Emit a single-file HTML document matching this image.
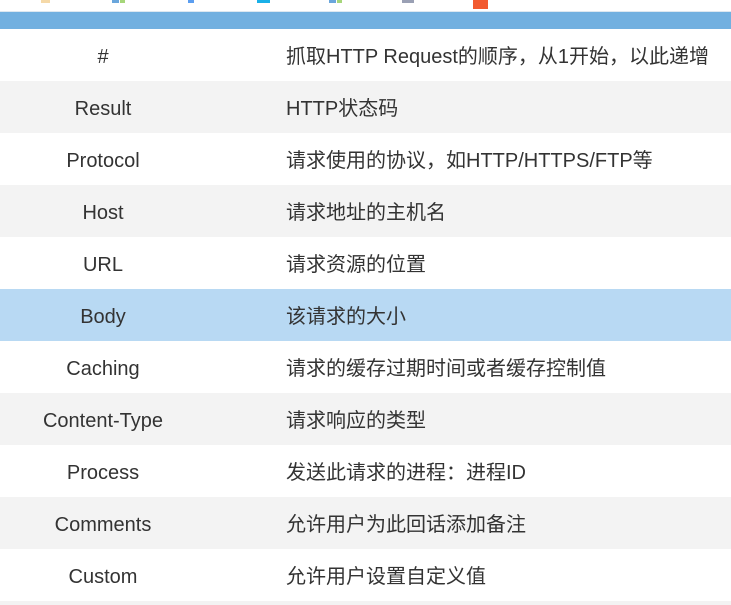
<!DOCTYPE html>
<html><head><meta charset="utf-8"><style>
html,body{margin:0;width:731px;height:605px;overflow:hidden}
body{background:#fff;font-family:"Liberation Sans","Noto Sans CJK SC",sans-serif;color:#333;position:relative}
.i{position:absolute;top:0;height:3px}
.hd{position:absolute;top:11px;left:0;width:731px;height:18px;background:#72b0e0;border-top:1px solid #dde8f0;box-sizing:border-box}
.r{position:absolute;left:0;width:731px;height:52px;font-size:20px;line-height:56px;overflow:hidden}
.r .a{position:absolute;left:0;width:206px;text-align:center}
.r .b{position:absolute;left:286px;white-space:nowrap}
.g{background:#f3f3f3}.s{background:#b8d9f3}
</style></head><body>
<div class="i" style="left:41px;width:9px;background:#f5d9a8"></div>
<div class="i" style="left:112px;width:7px;background:#6aa6dc"></div>
<div class="i" style="left:120px;width:5px;background:#a6d67a"></div>
<div class="i" style="left:188px;width:6px;background:#5b9ef0"></div>
<div class="i" style="left:257px;width:13px;background:#19b0e8"></div>
<div class="i" style="left:329px;width:7px;background:#6aa6dc"></div>
<div class="i" style="left:337px;width:5px;background:#a6d67a"></div>
<div class="i" style="left:402px;width:12px;background:#9aa0b4"></div>
<div class="i" style="left:473px;width:15px;height:9px;background:#f25a30"></div>
<div class="hd"></div>
<div class="r" style="top:29px"><span class="a">#</span><span class="b">抓取HTTP Request的顺序，从1开始，以此递增</span></div>
<div class="r g" style="top:81px"><span class="a">Result</span><span class="b">HTTP状态码</span></div>
<div class="r" style="top:133px"><span class="a">Protocol</span><span class="b">请求使用的协议，如HTTP/HTTPS/FTP等</span></div>
<div class="r g" style="top:185px"><span class="a">Host</span><span class="b">请求地址的主机名</span></div>
<div class="r" style="top:237px"><span class="a">URL</span><span class="b">请求资源的位置</span></div>
<div class="r s" style="top:289px"><span class="a">Body</span><span class="b">该请求的大小</span></div>
<div class="r" style="top:341px"><span class="a">Caching</span><span class="b">请求的缓存过期时间或者缓存控制值</span></div>
<div class="r g" style="top:393px"><span class="a">Content-Type</span><span class="b">请求响应的类型</span></div>
<div class="r" style="top:445px"><span class="a">Process</span><span class="b">发送此请求的进程：进程ID</span></div>
<div class="r g" style="top:497px"><span class="a">Comments</span><span class="b">允许用户为此回话添加备注</span></div>
<div class="r" style="top:549px"><span class="a">Custom</span><span class="b">允许用户设置自定义值</span></div>
<div class="r g" style="top:601px;height:4px"></div>
</body></html>
